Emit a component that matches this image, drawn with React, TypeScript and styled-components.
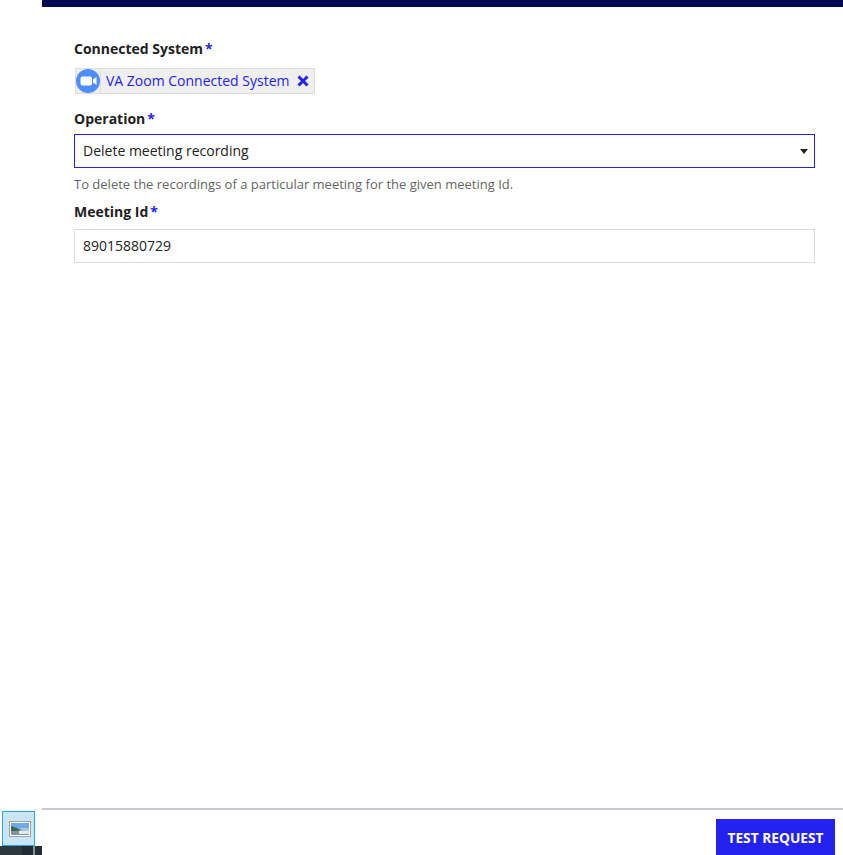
import React from 'react';
import styled, { createGlobalStyle } from 'styled-components';

const GlobalStyle = createGlobalStyle`
  html, body {
    margin: 0;
    padding: 0;
    background: #fff;
  }
  body {
    font-family: "Open Sans", "Liberation Sans", sans-serif;
    font-size: 14px;
    color: #222;
  }
`;

const Page = styled.div`
  display: flex;
  width: 843px;
  height: 855px;
  overflow: hidden;
`;

const Gutter = styled.aside`
  width: 42px;
  flex: none;
  display: flex;
  flex-direction: column;
  justify-content: flex-end;
`;

const Thumb = styled.div`
  width: 33px;
  height: 35px;
  margin-left: 2px;
  padding-left: 3px;
  box-sizing: border-box;
  border: 1px solid #29a8e0;
  background: #c9e6f6;
  display: flex;
  align-items: center;
  justify-content: center;
`;

const DarkStrip = styled.div`
  height: 9px;
  background: linear-gradient(90deg, #2b383e 0 22px, #1f2c34 22px 33px, #8a9298 33px 35px, #232f36 35px);
`;

const Main = styled.main`
  flex: 1;
  min-width: 0;
  display: flex;
  flex-direction: column;
`;

const TopBar = styled.div`
  height: 7px;
  background: #000b52;
`;

const Form = styled.div`
  flex: 1;
  padding: 32px 28px 0 32px;
  display: flex;
  flex-direction: column;
`;

const Label = styled.div`
  font-weight: 700;
  font-size: 14px;
  line-height: 20px;
  color: #222;
`;

const Star = styled.span`
  color: #2322f0;
  font-weight: 700;
  margin-left: 2px;
`;

const Chip = styled.div`
  align-self: flex-start;
  margin: 9px 0 15px 1px;
  width: 240px;
  height: 26px;
  box-sizing: border-box;
  display: flex;
  align-items: center;
  background: #efeff0;
  border: 1px solid #dcdcdc;
`;

const ChipIcon = styled.div`
  width: 24px;
  height: 24px;
  flex: none;
  border-right: 1px solid #dcdcdc;
  display: flex;
  align-items: center;
  justify-content: center;
`;

const ChipText = styled.span`
  margin-left: 5px;
  padding-bottom: 2px;
  flex: 1;
  color: #2322f0;
  font-size: 14px;
  white-space: nowrap;
`;

const ChipClose = styled.svg`
  width: 12px;
  height: 12px;
  margin-right: 5px;
`;

const Field = styled.div<{ $active?: boolean }>`
  height: 34px;
  margin-top: ${(p) => (p.$active ? '5px' : '7px')};
  box-sizing: border-box;
  padding: 0 8px 2px;
  display: flex;
  align-items: center;
  justify-content: space-between;
  background: #fff;
  border: 1px solid ${(p) => (p.$active ? '#2322f0' : '#dcdcdc')};
  font-size: 14px;
  color: #222;
`;

const Caret = styled.span`
  width: 0;
  height: 0;
  margin: 2px -2px 0 0;
  border-left: 4.5px solid transparent;
  border-right: 4.5px solid transparent;
  border-top: 5px solid #222;
`;

const Help = styled.div`
  margin: 7px 0 9px;
  font-size: 13px;
  line-height: 18px;
  color: #666;
`;

const Footer = styled.footer`
  height: 47px;
  box-sizing: border-box;
  border-top: 2px solid #c8cad6;
  padding: 9px 8px 0 0;
  display: flex;
  justify-content: flex-end;
`;

const Button = styled.button`
  width: 119px;
  height: 36px;
  padding: 0;
  border: none;
  background: #2322f0;
  color: #fff;
  font-family: inherit;
  font-size: 13.75px;
  font-weight: 700;
`;

const App: React.FC = () => {
  return (
    <Page>
      <GlobalStyle />
      <Gutter>
        <Thumb>
          <svg width="22" height="16" viewBox="0 0 22 16">
            <rect x="0.5" y="0.5" width="21" height="15" fill="#fff" stroke="#a0a0a0" />
            <rect x="2" y="2" width="18" height="5" fill="#6fa8ec" />
            <rect x="2" y="7" width="18" height="3" fill="#a6cbd8" />
            <path d="M2 5 L8 7 L13 9 L8 10 L2 11 Z" fill="#3d6b50" />
            <rect x="2" y="10" width="18" height="4" fill="#7f93a0" />
            <rect x="10" y="10" width="10" height="3" fill="#dfe8ee" />
          </svg>
        </Thumb>
        <DarkStrip />
      </Gutter>
      <Main>
        <TopBar />
        <Form>
          <Label>
            Connected System<Star>*</Star>
          </Label>
          <Chip>
            <ChipIcon>
              <svg width="24" height="24" viewBox="0 0 24 24">
                <circle cx="12" cy="12" r="12" fill="#4f8dfb" />
                <rect x="4.5" y="7.5" width="11.5" height="9" rx="2" fill="#fff" />
                <path d="M17 10.5 L20.5 8 V16 L17 13.5 Z" fill="#fff" />
              </svg>
            </ChipIcon>
            <ChipText>VA Zoom Connected System</ChipText>
            <ChipClose viewBox="0 0 12 12">
              <path d="M1.5 1.5 L10.5 10.5 M10.5 1.5 L1.5 10.5" stroke="#2322f0" strokeWidth="3" />
            </ChipClose>
          </Chip>
          <Label>
            Operation<Star>*</Star>
          </Label>
          <Field $active>
            Delete meeting recording
            <Caret />
          </Field>
          <Help>To delete the recordings of a particular meeting for the given meeting Id.</Help>
          <Label>
            Meeting Id<Star>*</Star>
          </Label>
          <Field>89015880729</Field>
        </Form>
        <Footer>
          <Button>TEST REQUEST</Button>
        </Footer>
      </Main>
    </Page>
  );
};

export default App;
